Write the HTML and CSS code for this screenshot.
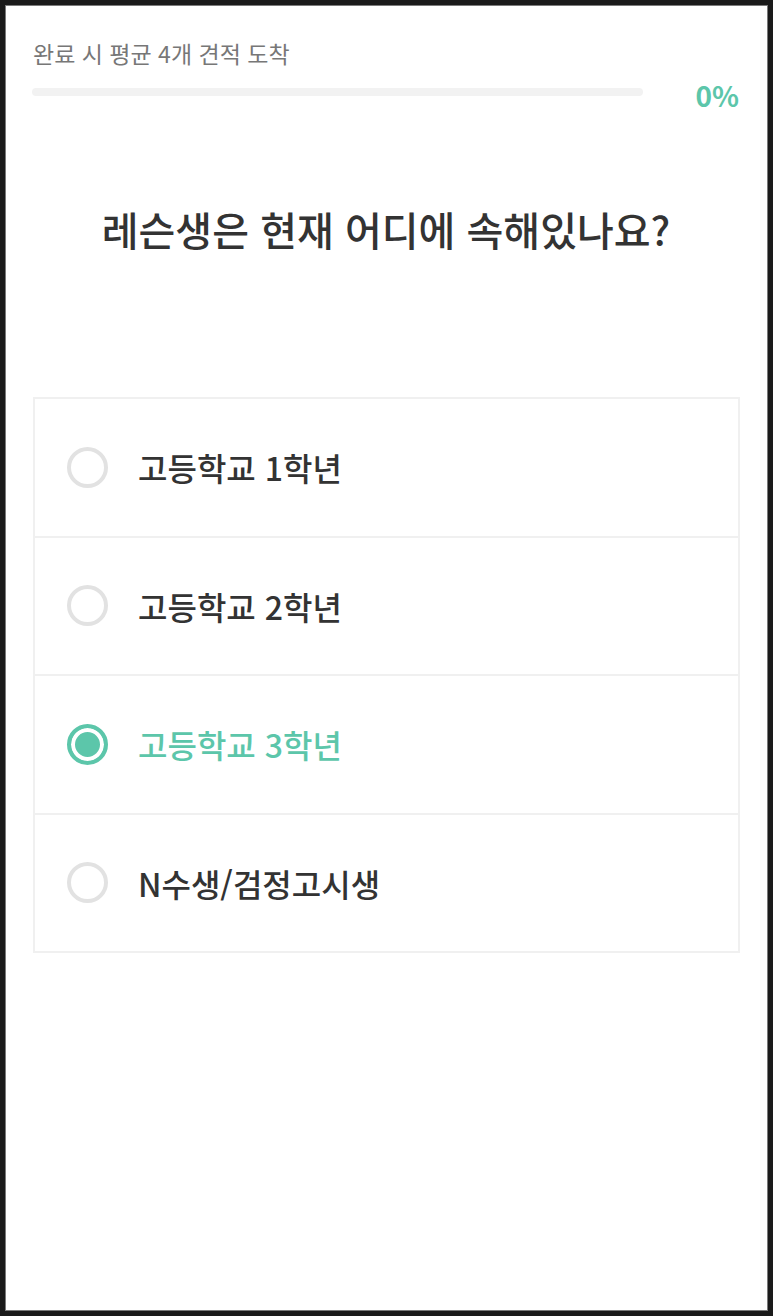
FILE: index.html
```html
<!DOCTYPE html>
<html lang="ko">
<head>
    <meta charset="UTF-8">
    <meta name="viewport" content="width=device-width, initial-scale=1.0">
    <title>레슨 요청</title>
    <link rel="stylesheet" href="styles.css">
</head>
<body>
    <div class="screen">
        <div class="progress-head">
            <div class="progress-label">완료 시 평균 4개 견적 도착</div>
            <div class="progress-row">
                <div class="progress-bar"><div class="progress-fill" style="width: 0%"></div></div>
                <span class="progress-value">0%</span>
            </div>
        </div>

        <h2 class="question">레슨생은 현재 어디에 속해있나요?</h2>

        <ul class="options">
            <li class="option">
                <span class="radio"></span>
                <span class="option-text">고등학교 1학년</span>
            </li>
            <li class="option">
                <span class="radio"></span>
                <span class="option-text">고등학교 2학년</span>
            </li>
            <li class="option selected">
                <span class="radio"></span>
                <span class="option-text">고등학교 3학년</span>
            </li>
            <li class="option">
                <span class="radio"></span>
                <span class="option-text">N수생/검정고시생</span>
            </li>
        </ul>
    </div>
</body>
</html>
```

FILE: styles.css
```css
html, body {
    margin: 0;
    padding: 0;
}
body {
    background: #1a1a1a;
    padding: 5px;
    font-family: "Noto Sans CJK KR", "Noto Sans", sans-serif;
    color: #333;
}
.screen {
    box-sizing: border-box;
    height: 1306px;
    background: #fff;
    border: 1px solid #7a7a7a;
    padding: 0 27px 0 26px;
}
.progress-head {
    padding-top: 31px;
}
.progress-label {
    font-size: 23px;
    line-height: 32px;
    color: #777;
    padding-left: 1px;
}
.progress-row {
    display: flex;
    align-items: center;
    margin-top: 6px;
}
.progress-bar {
    flex: 1;
    height: 8px;
    border-radius: 4px;
    background: #f2f2f2;
    margin-right: 53px;
    margin-bottom: 2px;
    overflow: hidden;
}
.progress-fill {
    height: 100%;
    background: #5cc6aa;
}
.progress-value {
    font-size: 28px;
    font-weight: bold;
    color: #5cc6aa;
    line-height: 32px;
    padding-top: 4px;
    padding-right: 1px;
}
.question {
    margin: 93px 0 0;
    text-align: center;
    font-size: 40px;
    font-weight: 500;
    line-height: 50px;
    color: #333;
}
.options {
    list-style: none;
    margin: 143px 0 0 1px;
    padding: 0;
    border: 2px solid #f0f0f0;
}
.option {
    display: flex;
    align-items: center;
    height: 136.5px;
    padding-left: 32px;
    border-top: 2px solid #f0f0f0;
}
.option:first-child {
    border-top: none;
}
.radio {
    box-sizing: border-box;
    width: 41px;
    height: 41px;
    border-radius: 50%;
    border: 4px solid #e2e2e2;
    margin-right: 30px;
    flex-shrink: 0;
}
.option-text {
    font-size: 32px;
    font-weight: 500;
    color: #333;
}
.selected .radio {
    border-color: #5cc6aa;
    background: #5cc6aa;
    box-shadow: inset 0 0 0 4px #fff;
}
.selected .option-text {
    color: #5cc6aa;
}
```
